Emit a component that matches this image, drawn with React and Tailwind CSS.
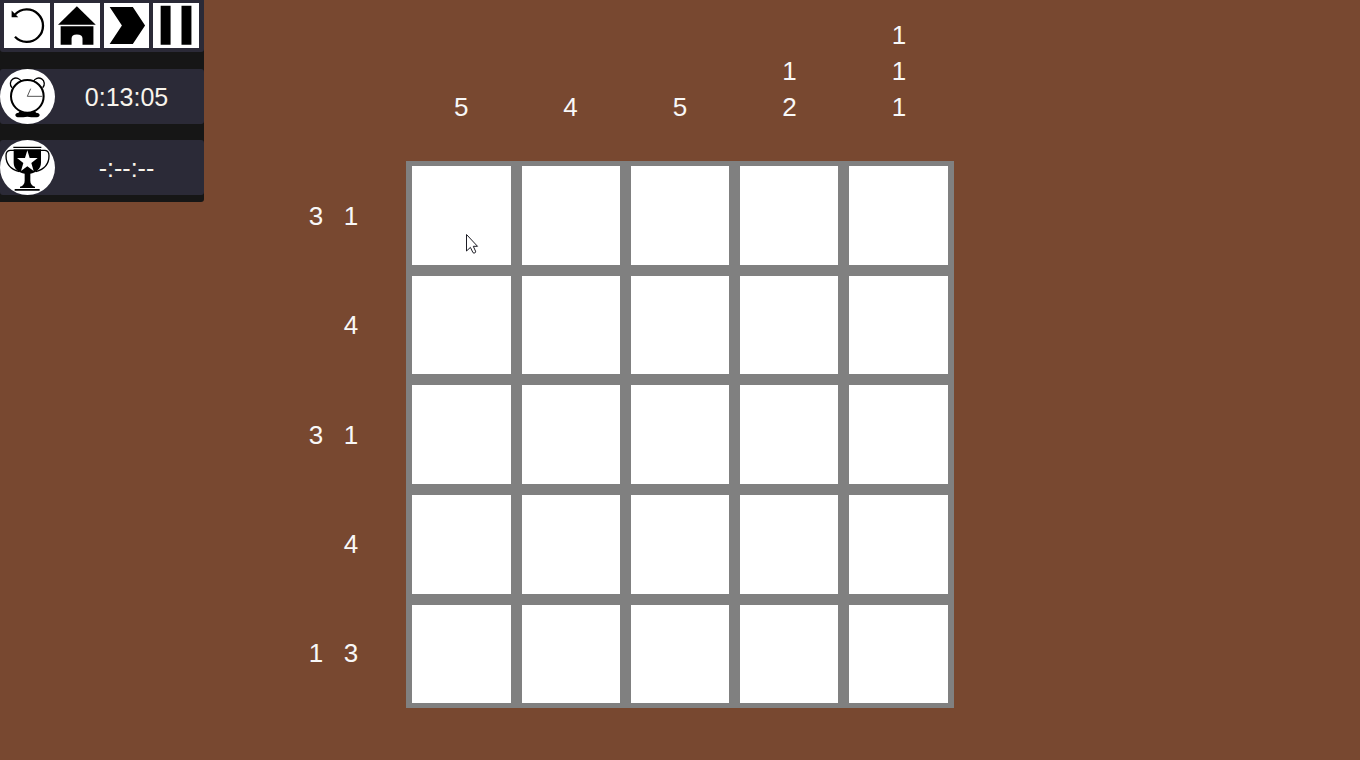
const columnHints = [[5], [4], [5], [1, 2], [1, 1, 1]];
const rowHints = [[3, 1], [4], [3, 1], [4], [1, 3]];

function RestartIcon() {
  return (
    <svg viewBox="0 0 136 136" className="size-full" aria-hidden="true">
      <path d="M32 102A49 49 0 1 0 32 35" fill="none" stroke="#000" strokeWidth="7" />
      <path d="M22 23V43H42Z" />
    </svg>
  );
}

function HomeIcon() {
  return (
    <svg viewBox="0 0 136 136" className="size-full" aria-hidden="true">
      <path d="M68 10L125 66H11Z" />
      <path d="M19 70H118V126H85V107Q85 95 68 95Q52 95 52 107V126H19Z" />
    </svg>
  );
}

function NextIcon() {
  return (
    <svg viewBox="0 0 136 136" className="size-full" aria-hidden="true">
      <path d="M16 12H86L123 68L86 124H16L53 68Z" />
    </svg>
  );
}

function PauseIcon() {
  return (
    <svg viewBox="0 0 136 136" className="size-full" aria-hidden="true">
      <path d="M22 8H52V126H22ZM85 8H115V126H85Z" />
    </svg>
  );
}

function ClockIcon() {
  return (
    <svg viewBox="0 0 165 165" className="size-[55px] shrink-0" aria-hidden="true">
      <circle cx="82.5" cy="82.5" r="82.5" fill="#fff" />
      <g fill="none" stroke="#000">
        <path d="M36 56A17 17 0 1 1 64 38M128 56A17 17 0 1 0 100 38" strokeWidth="4" />
        <circle cx="82" cy="82" r="49" strokeWidth="6" />
        <path d="M92 59L82 82H127" strokeWidth="2" />
      </g>
      <path d="M58 127Q82 137 106 127L108 131Q119 132 119 138Q119 145 106 145Q94 145 82 143Q70 145 58 145Q46 145 46 138Q46 132 56 131Z" />
    </svg>
  );
}

function TrophyIcon() {
  return (
    <svg viewBox="0 0 165 165" className="size-[55px] shrink-0" aria-hidden="true">
      <circle cx="82.5" cy="82.5" r="82.5" fill="#fff" />
      <path d="M40 20H124V24H40ZM44 147H119V152H44Z" />
      <path d="M41 28H123V68C123 88 107 97 91 101V122Q91 136 105 140V144H60V140Q74 136 74 122V101C57 97 41 88 41 68Z" />
      <path
        d="M42 31H30Q18 32 18 47C18 72 32 88 58 95M122 31H135Q147 32 147 47C147 72 133 88 107 95"
        fill="none"
        stroke="#000"
        strokeWidth="4"
      />
      <path d="M82 31L89 54H113L94 69L101 93L82 79L63 93L70 69L51 54H75Z" fill="#fff" />
    </svg>
  );
}

function Pointer() {
  return (
    <svg
      viewBox="0 0 14 21"
      className="pointer-events-none absolute left-[54px] top-[68px] h-[21px] w-[14px]"
      aria-hidden="true"
    >
      <path
        d="M.5 .5V17L4.4 13.4L7 18.7Q8 19.6 9.3 18.6Q9.9 18 9.5 17.1L7.3 12.3H11.5Z"
        fill="#fff"
        stroke="#1c1c24"
      />
    </svg>
  );
}

const actions = [
  { label: "Restart", Icon: RestartIcon },
  { label: "Home", Icon: HomeIcon },
  { label: "Next puzzle", Icon: NextIcon },
  { label: "Pause", Icon: PauseIcon },
];

function Stat({ Icon, value }) {
  return (
    <div className="flex h-[55px] items-center rounded-[3px] bg-[#2b2a37] text-[25px] text-[#f8f4ec]">
      <Icon />
      <span className="flex-1 pr-[6px] text-center">{value}</span>
    </div>
  );
}

export default function App() {
  return (
    <main className="grid min-h-screen grid-cols-[1fr_auto_1fr] bg-[#784830] font-['Liberation_Sans',Arial,sans-serif] text-[26px] leading-[36px] text-[#f8f8f8]">
      <div className="flex items-start justify-between">
        <aside className="flex w-[204px] flex-col gap-4 rounded-br-[3px] bg-[#161616] pb-[7px]">
          <nav className="mb-px flex h-[52px] gap-1 rounded-b-[3px] bg-[#2b2a37] pb-1 pl-1 pr-[5px] pt-[3px]">
            {actions.map(({ label, Icon }) => (
              <button key={label} type="button" aria-label={label} className="min-w-0 flex-1 bg-white">
                <Icon />
              </button>
            ))}
          </nav>
          <Stat Icon={ClockIcon} value="0:13:05" />
          <Stat Icon={TrophyIcon} value="-:--:--" />
        </aside>
        <div className="mr-[38px] mt-[161px] grid h-[72vh] grid-rows-5">
          {rowHints.map((hints, row) => (
            <div key={row} className="flex items-center justify-end">
              {hints.map((hint, i) => (
                <span key={i} className="w-[35px] text-center">{hint}</span>
              ))}
            </div>
          ))}
        </div>
      </div>

      <section className="flex w-[72vh] flex-col">
        <div className="grid h-[161px] grid-cols-5 items-end pb-[36px]">
          {columnHints.map((hints, column) => (
            <div key={column} className="flex flex-col items-center">
              {hints.map((hint, i) => (
                <span key={i}>{hint}</span>
              ))}
            </div>
          ))}
        </div>
        <div className="grid h-[72vh] grid-cols-5 grid-rows-5 gap-[11px] bg-[#808080] px-[6px] py-[5px]">
          {rowHints.map((_, row) =>
            columnHints.map((_, column) => (
              <button
                key={`${row}-${column}`}
                type="button"
                aria-label={`Row ${row + 1}, column ${column + 1}`}
                className="relative bg-white"
              >
                {row === 0 && column === 0 && <Pointer />}
              </button>
            ))
          )}
        </div>
      </section>
    </main>
  );
}
